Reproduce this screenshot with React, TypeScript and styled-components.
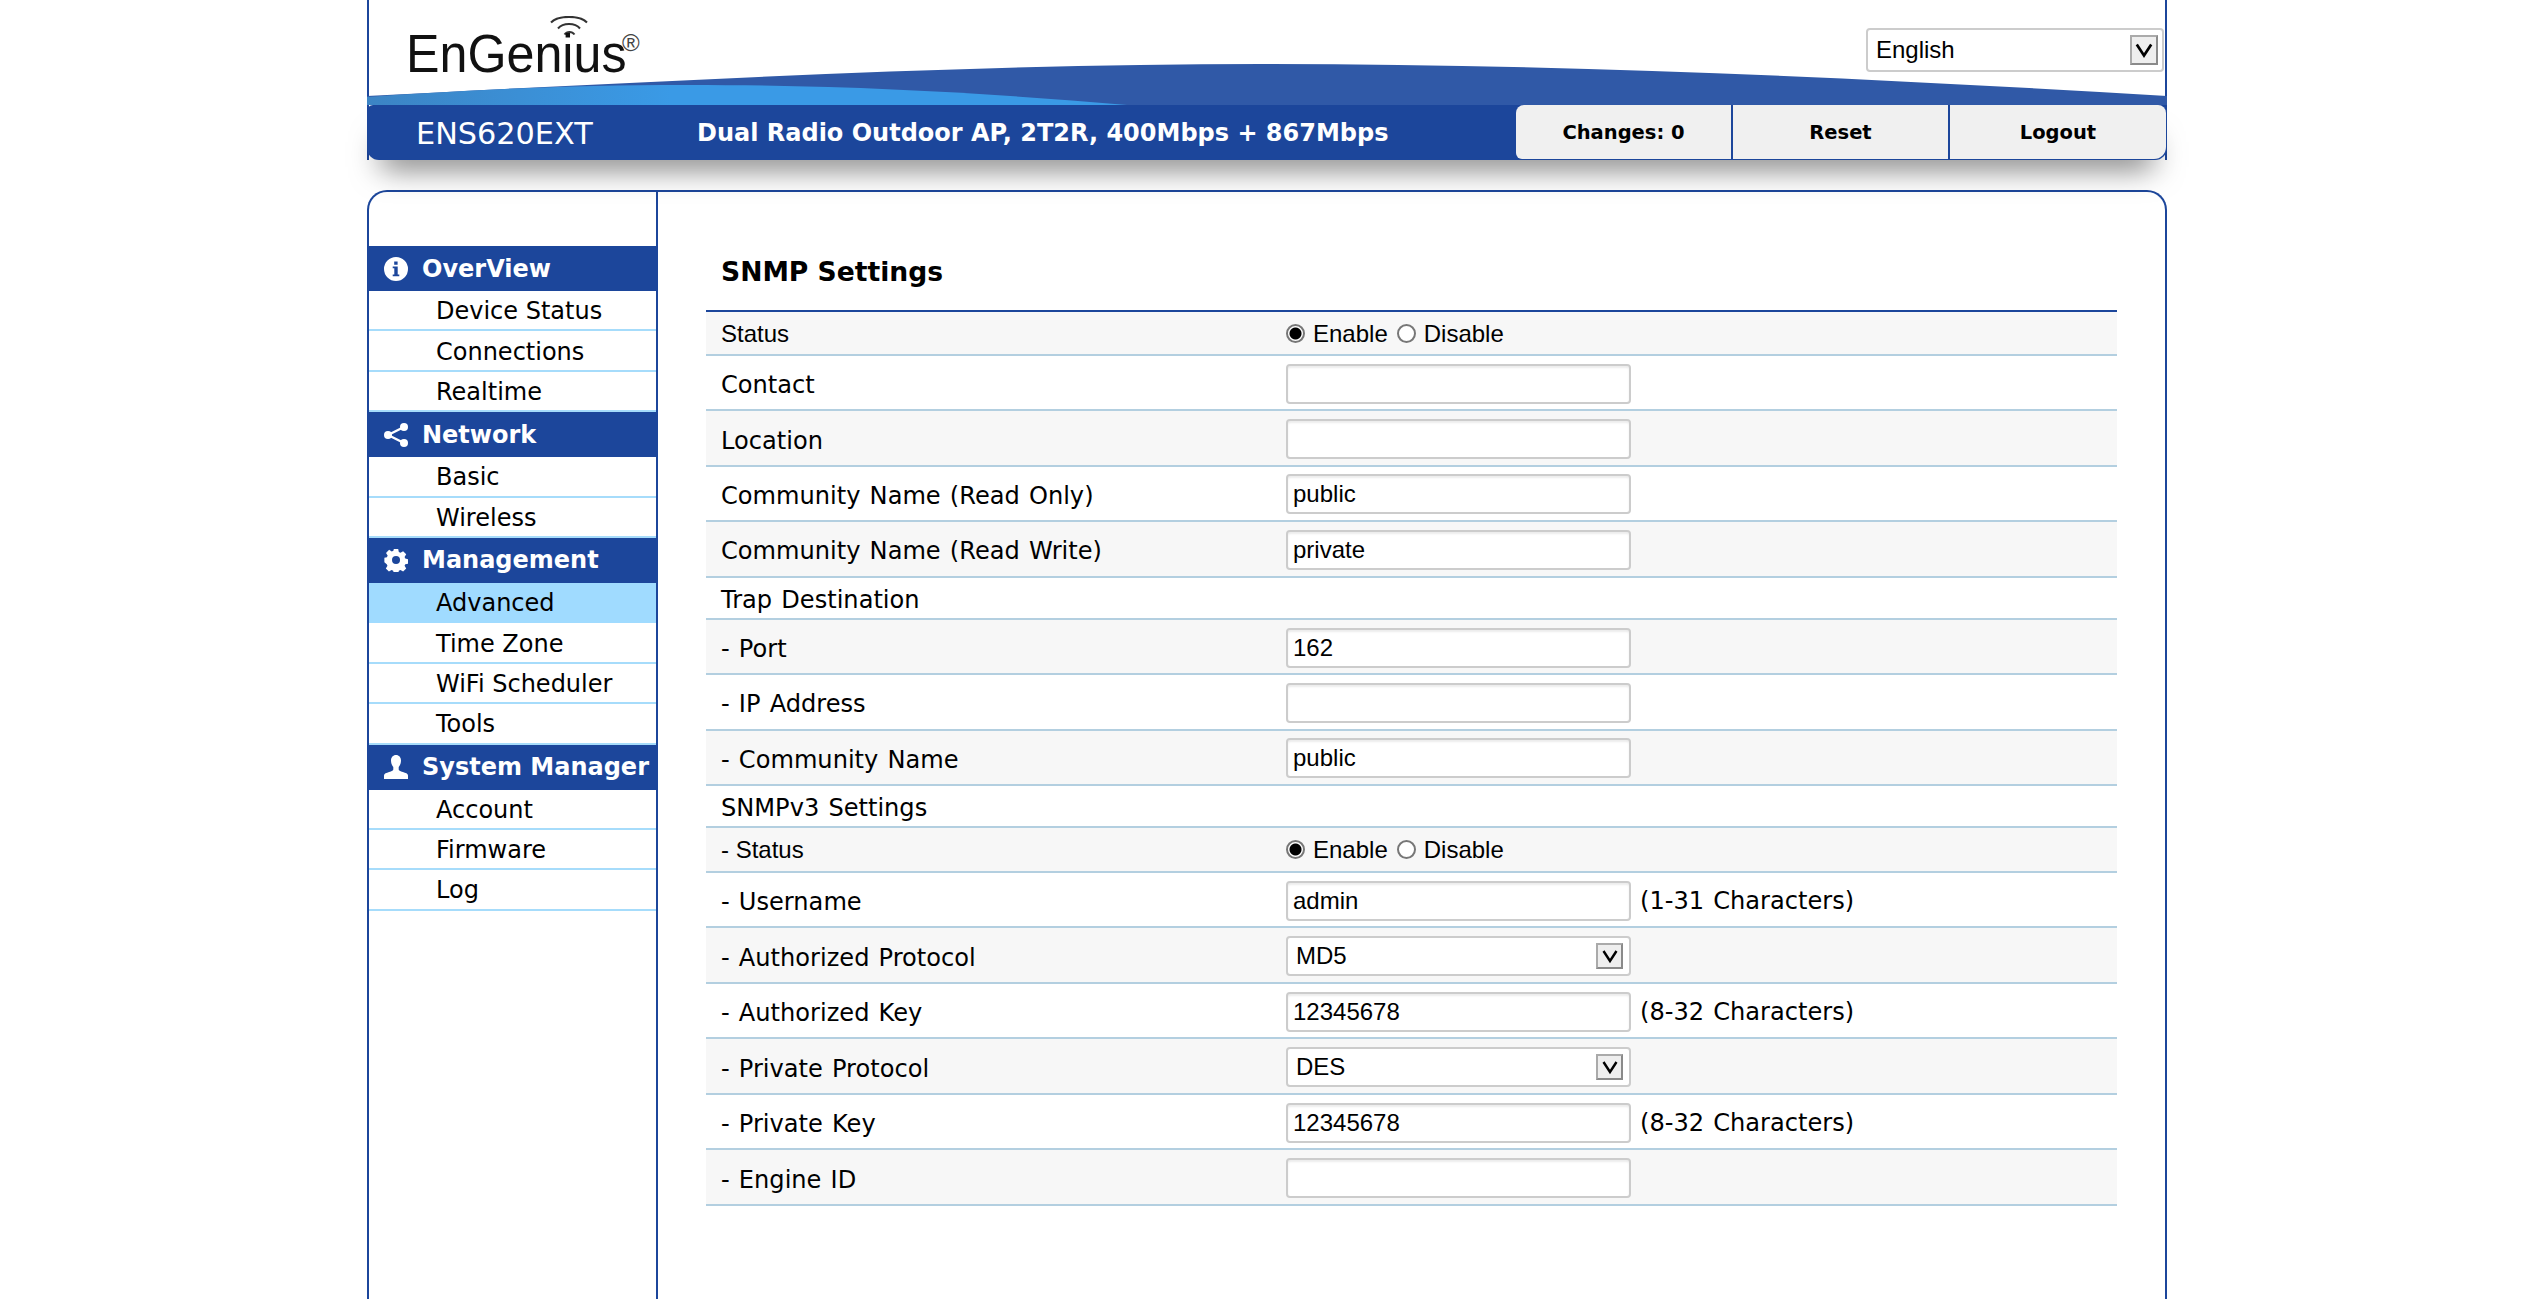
import React from "react";
import styled, { createGlobalStyle } from "styled-components";

const Global = createGlobalStyle`
  html, body { margin: 0; padding: 0; background: #fff; }
  body { font-family: "DejaVu Sans", Verdana, sans-serif; color: #000; height: 1299px; overflow: hidden; }
`;

const BLUE = "#1c469b";

const Page = styled.div`
  width: 1800px;
  margin: 0 0 0 367px;
`;

const Header = styled.header`
  position: relative;
  height: 160px;
  border-left: 2px solid ${BLUE};
  border-right: 2px solid ${BLUE};
  box-sizing: border-box;
`;

const Top = styled.div`
  position: relative;
  height: 105px;
  display: flex;
  justify-content: space-between;
  align-items: flex-start;
`;

const Wave = styled.svg`
  position: absolute;
  left: -2px;
  top: 0;
  width: 1800px;
  height: 105px;
`;

const Logo = styled.div`
  position: relative;
  margin: 10px 0 0 37px;
  width: 245px;
  height: 70px;
`;

const LogoText = styled.span`
  position: absolute;
  left: 0;
  top: 12px;
  font: 400 54px/62px "Liberation Sans", Arial, sans-serif;
  color: #111;
  transform: scaleX(0.93);
  transform-origin: left center;
`;

const LogoMark = styled.svg`
  position: absolute;
  left: 144px;
  top: 6px;
  width: 40px;
  height: 22px;
`;

const LogoReg = styled.span`
  position: absolute;
  left: 216px;
  top: 21px;
  font: 400 24px/24px "Liberation Sans", Arial, sans-serif;
  color: #444;
`;

const LangWrap = styled.div`
  position: relative;
  margin: 28px 1px 0 0;
  width: 298px;
  height: 44px;
`;

const Select = styled.select`
  appearance: none;
  box-sizing: border-box;
  width: 100%;
  height: 100%;
  border: 2px solid #ccc;
  border-radius: 4px;
  background: #fff;
  padding: 0 0 2px 8px;
  font: 400 24px "Liberation Sans", Arial, sans-serif;
  color: #000;
`;

const Arrow = styled.span`
  position: absolute;
  right: 6px;
  top: 50%;
  transform: translateY(-50%);
  box-sizing: border-box;
  width: 28px;
  height: 30px;
  display: flex;
  align-items: center;
  justify-content: center;
  border: 2px solid #8a8a8a;
  border-top-color: #aaa;
  border-left-color: #aaa;
  background: #eee;
  pointer-events: none;
`;

const SmallArrow = styled(Arrow)`
  width: 27px;
  height: 26px;
  right: 8px;
`;

const Bar = styled.div`
  position: absolute;
  left: -2px;
  right: -2px;
  top: 105px;
  height: 55px;
  box-sizing: border-box;
  display: flex;
  align-items: center;
  background: ${BLUE};
  border-radius: 6px 0 12px 12px;
  box-shadow: 0 22px 30px -14px rgba(0, 0, 0, 0.55);
`;

const Model = styled.div`
  width: 330px;
  padding-left: 49px;
  box-sizing: border-box;
  font-size: 30.3px;
  color: #fff;
  margin-top: 2px;
`;

const Tagline = styled.div`
  flex: 1;
  font-size: 24px;
  font-weight: 700;
  color: #fff;
`;

const Buttons = styled.div`
  display: flex;
  height: 54px;
  margin-right: 1px;
  align-self: flex-start;
`;

const HeadButton = styled.button<{ $first?: boolean; $last?: boolean }>`
  width: ${(p) => (p.$last ? "216px" : "217px")};
  height: 54px;
  padding: 0;
  border: 0;
  border-right: ${(p) => (p.$last ? "0" : `2px solid ${BLUE}`)};
  border-radius: ${(p) => (p.$first ? "8px 0 0 6px" : p.$last ? "0 8px 12px 0" : "0")};
  background: #f0f0f0;
  font: 700 19.5px "DejaVu Sans", Verdana, sans-serif;
  color: #000;
`;

const Frame = styled.div`
  margin-top: 30px;
  height: 1120px;
  box-sizing: border-box;
  display: flex;
  border: 2px solid ${BLUE};
  border-bottom: 0;
  border-radius: 20px 20px 0 0;
`;

const Sidebar = styled.nav`
  width: 287px;
  padding-top: 54px;
  border-right: 2px solid ${BLUE};
`;

const NavHead = styled.div`
  height: 45px;
  display: flex;
  align-items: center;
  gap: 14px;
  padding-left: 15px;
  background: ${BLUE};
  color: #fff;
  font-size: 24px;
  font-weight: 700;
  white-space: nowrap;
`;

const NavIcon = styled.svg`
  width: 24px;
  height: 24px;
  fill: #fff;
  flex: none;
`;

const NavItem = styled.div<{ $active?: boolean }>`
  box-sizing: border-box;
  height: 40.4px;
  padding: 2px 0 0 67px;
  display: flex;
  align-items: center;
  font-size: 24px;
  background: ${(p) => (p.$active ? "#a0dbff" : "#fff")};
  border-bottom: 2px solid ${(p) => (p.$active ? "#a0dbff" : "#a6dcfb")};
`;

const Main = styled.main`
  flex: 1;
  padding: 0 48px;
`;

const Title = styled.h1`
  margin: 0;
  height: 118px;
  padding: 64px 0 0 15px;
  box-sizing: border-box;
  font-size: 26.6px;
  font-weight: 700;
`;

const Table = styled.div`
  border-top: 2px solid ${BLUE};
`;

const Row = styled.div<{ $h: number }>`
  box-sizing: border-box;
  height: ${(p) => p.$h}px;
  padding-top: 2px;
  display: flex;
  align-items: center;
  border-bottom: 2px solid #b3cfe0;
  &:nth-child(odd) {
    background: #f7f7f7;
  }
`;

const Label = styled.div`
  width: 580px;
  padding: 3px 0 0 15px;
  box-sizing: border-box;
  font: 400 24.1px "DejaVu Sans", Verdana, sans-serif;
  word-spacing: 1.5px;
`;

const ArialLabel = styled.div`
  width: 580px;
  padding-left: 15px;
  box-sizing: border-box;
  font: 400 24px "Liberation Sans", Arial, sans-serif;
`;

const Field = styled.div`
  display: flex;
  align-items: center;
`;

const Radios = styled.div`
  display: flex;
  align-items: center;
  font: 400 24px "Liberation Sans", Arial, sans-serif;
`;

const Radio = styled.input`
  appearance: none;
  box-sizing: border-box;
  width: 19px;
  height: 19px;
  margin: -2px 8px 0 0;
  border: 2px solid #777;
  border-radius: 50%;
  background: #fff;
  &:checked {
    background: radial-gradient(circle, #000 0 5.5px, #fff 6.5px);
  }
`;

const RadioText = styled.span`
  margin-right: 9px;
`;

const TextInput = styled.input`
  box-sizing: border-box;
  width: 345px;
  height: 40px;
  padding: 0 5px;
  border: 2px solid #ccc;
  border-radius: 4px;
  background: #fff;
  box-shadow: inset 0 2px 2px rgba(0, 0, 0, 0.08);
  font: 400 24px "Liberation Sans", Arial, sans-serif;
  color: #000;
  outline: none;
`;

const SelectWrap = styled.div`
  position: relative;
  width: 345px;
  height: 40px;
`;

const SmallSelect = styled(Select)`
  padding-left: 8px;
`;

const Hint = styled.span`
  margin-left: 9px;
  font-size: 24.1px;
  word-spacing: 1.5px;
`;

const Chevron = ({ size = 20 }: { size?: number }) => (
  <svg width={size} height={size} viewBox="0 0 18 18" fill="none" stroke="#000" strokeWidth="2.4">
    <path d="M2.500 4 9 14 15.500 4" />
  </svg>
);

const InfoIcon = () => (
  <NavIcon viewBox="0 0 24 24">
    <path
      fillRule="evenodd"
      d="M12 0a12 12 0 1 0 0 24 12 12 0 0 0 0-24ZM10.200 4.500h3.400v3.200h-3.400ZM8.700 9.500h5v8h1.600v1.800H8.700v-1.800h1.600v-6.200H8.700Z"
    />
  </NavIcon>
);

const ShareIcon = () => (
  <NavIcon viewBox="0 0 24 24">
    <circle cx="20" cy="4" r="4" />
    <circle cx="4" cy="12" r="4" />
    <circle cx="20" cy="20" r="4" />
    <path d="M4 12 20 4M4 12l16 8" stroke="#fff" strokeWidth="2.400" />
  </NavIcon>
);

const GearIcon = () => (
  <NavIcon viewBox="0 0 24 24">
    <path
      fillRule="evenodd"
      d="M9.600 0h4.800l.7 3.300 1.800.8 2.900-1.800 3.400 3.400-1.800 2.900.8 1.800 3.300.7v4.800l-3.300.7-.8 1.800 1.800 2.900-3.400 3.400-2.900-1.800-1.800.8-.7 3.300H9.600l-.7-3.300-1.800-.8-2.900 1.800-3.400-3.400 1.800-2.900-.8-1.800L-.8 14.400V9.600l2.800-.7.8-1.800L1 4.200l3.400-3.400 2.900 1.800 1.800-.8ZM12 7.600a4.400 4.400 0 1 0 0 8.800 4.400 4.400 0 0 0 0-8.800Z"
      transform="translate(1.100 1.100) scale(.91)"
    />
  </NavIcon>
);

const UserIcon = () => (
  <NavIcon viewBox="0 0 24 24">
    <path d="M12 0c3 0 5 2.300 5 5.600 0 2.600-1 5-2.300 6.400v2.600c0 1 1.500 1.700 4.200 2.500 2.700.9 5.100 1.500 5.100 3.500V24H0v-3.400c0-2 2.400-2.600 5.100-3.500 2.700-.8 4.200-1.500 4.200-2.500V12C8 10.600 7 8.200 7 5.600 7 2.300 9 0 12 0Z" />
  </NavIcon>
);

const nav: { head: string; icon: React.ReactNode; items: string[] }[] = [
  { head: "OverView", icon: <InfoIcon />, items: ["Device Status", "Connections", "Realtime"] },
  { head: "Network", icon: <ShareIcon />, items: ["Basic", "Wireless"] },
  { head: "Management", icon: <GearIcon />, items: ["Advanced", "Time Zone", "WiFi Scheduler", "Tools"] },
  { head: "System Manager", icon: <UserIcon />, items: ["Account", "Firmware", "Log"] },
];

type RowDef =
  | { h: number; label: string; kind: "radio" | "text" }
  | { h: number; label: string; kind: "input"; value?: string; hint?: string }
  | { h: number; label: string; kind: "select"; value: string };

const rows: RowDef[] = [
  { h: 44, label: "Status", kind: "radio" },
  { h: 55.4, label: "Contact", kind: "input" },
  { h: 55.4, label: "Location", kind: "input" },
  { h: 55.4, label: "Community Name (Read Only)", kind: "input", value: "public" },
  { h: 55.4, label: "Community Name (Read Write)", kind: "input", value: "private" },
  { h: 42.3, label: "Trap Destination", kind: "text" },
  { h: 55.4, label: "- Port", kind: "input", value: "162" },
  { h: 55.4, label: "- IP Address", kind: "input" },
  { h: 55.4, label: "- Community Name", kind: "input", value: "public" },
  { h: 41.7, label: "SNMPv3 Settings", kind: "text" },
  { h: 45.2, label: "- Status", kind: "radio" },
  { h: 55.5, label: "- Username", kind: "input", value: "admin", hint: "(1-31 Characters)" },
  { h: 55.5, label: "- Authorized Protocol", kind: "select", value: "MD5" },
  { h: 55.5, label: "- Authorized Key", kind: "input", value: "12345678", hint: "(8-32 Characters)" },
  { h: 55.5, label: "- Private Protocol", kind: "select", value: "DES" },
  { h: 55.5, label: "- Private Key", kind: "input", value: "12345678", hint: "(8-32 Characters)" },
  { h: 55.5, label: "- Engine ID", kind: "input" },
];

export default function App() {
  return (
    <Page>
      <Global />
      <Header>
        <Top>
          <Wave viewBox="0 0 1800 105" preserveAspectRatio="none">
            <defs>
              <linearGradient id="swoosh" x1="0" x2="1" y1="0" y2="0">
                <stop offset="0" stopColor="#3c84c4" />
                <stop offset="0.4" stopColor="#3a9ae6" />
                <stop offset="1" stopColor="#3a9ae6" />
              </linearGradient>
            </defs>
            <path d="M0 96C280 82 600 64 895 64c305 0 605 14 905 32v9H0Z" fill="#3059a7" />
            <path d="M0 97C100 90 200 85 320 85c160 0 300 8 440 20H0Z" fill="url(#swoosh)" />
          </Wave>
          <Logo>
            <LogoMark viewBox="0 0 40 22" fill="none" stroke="#333" strokeWidth="2">
              <path d="M1 6.500C8-1 30-1 37 6.500M8 12.500C13 6.500 25 6.500 30 12.500M14.500 18.500C17 15 22 15 24.500 18.500" />
            </LogoMark>
            <LogoText>EnGenius</LogoText>
            <LogoReg>®</LogoReg>
          </Logo>
          <LangWrap>
            <Select defaultValue="English">
              <option>English</option>
            </Select>
            <Arrow>
              <Chevron />
            </Arrow>
          </LangWrap>
        </Top>
        <Bar>
          <Model>ENS620EXT</Model>
          <Tagline>Dual Radio Outdoor AP, 2T2R, 400Mbps + 867Mbps</Tagline>
          <Buttons>
            <HeadButton $first>Changes: 0</HeadButton>
            <HeadButton>Reset</HeadButton>
            <HeadButton $last>Logout</HeadButton>
          </Buttons>
        </Bar>
      </Header>
      <Frame>
        <Sidebar>
          {nav.map((section) => (
            <React.Fragment key={section.head}>
              <NavHead>
                {section.icon}
                {section.head}
              </NavHead>
              {section.items.map((item) => (
                <NavItem key={item} $active={item === "Advanced"}>
                  {item}
                </NavItem>
              ))}
            </React.Fragment>
          ))}
        </Sidebar>
        <Main>
          <Title>SNMP Settings</Title>
          <Table>
            {rows.map((r, i) => (
              <Row key={i} $h={r.h}>
                {r.kind === "radio" ? <ArialLabel>{r.label}</ArialLabel> : <Label>{r.label}</Label>}
                {r.kind === "radio" && (
                  <Radios>
                    <Radio type="radio" name={`r${i}`} defaultChecked />
                    <RadioText>Enable</RadioText>
                    <Radio type="radio" name={`r${i}`} />
                    <RadioText>Disable</RadioText>
                  </Radios>
                )}
                {r.kind === "input" && (
                  <Field>
                    <TextInput type="text" defaultValue={r.value ?? ""} />
                    {r.hint && <Hint>{r.hint}</Hint>}
                  </Field>
                )}
                {r.kind === "select" && (
                  <SelectWrap>
                    <SmallSelect defaultValue={r.value}>
                      <option>{r.value}</option>
                    </SmallSelect>
                    <SmallArrow>
                      <Chevron size={18} />
                    </SmallArrow>
                  </SelectWrap>
                )}
              </Row>
            ))}
          </Table>
        </Main>
      </Frame>
    </Page>
  );
}
